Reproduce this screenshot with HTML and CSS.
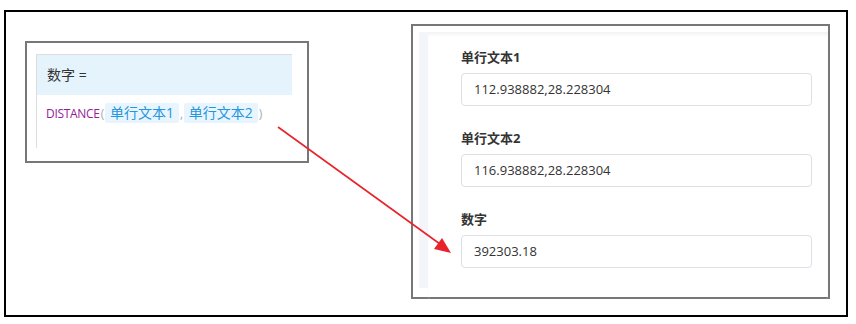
FILE: index.html
```html
<!DOCTYPE html>
<html lang="zh-CN">
<head>
    <meta charset="UTF-8">
    <title>DISTANCE 公式</title>
    <link rel="stylesheet" href="styles.css">
</head>
<body>
    <div class="frame">
        <div class="formula-box">
            <div class="formula">
                <div class="formula-head">数字 =</div>
                <div class="formula-body">
                    <span class="fn">DISTANCE</span><span class="paren">(</span><span class="chip">单行文本1</span><span class="paren">,</span><span class="chip">单行文本2</span><span class="paren">)</span>
                </div>
            </div>
        </div>

        <div class="form-box">
            <div class="strip"></div>
            <div class="form">
                <div class="field">
                    <label>单行文本1</label>
                    <div class="input">112.938882,28.228304</div>
                </div>
                <div class="field">
                    <label>单行文本2</label>
                    <div class="input">116.938882,28.228304</div>
                </div>
                <div class="field">
                    <label>数字</label>
                    <div class="input">392303.18</div>
                </div>
            </div>
        </div>

        <svg class="arrow" width="856" height="324" viewBox="0 0 856 324">
            <line x1="278" y1="127" x2="440" y2="244" stroke="#e8232b" stroke-width="1.6"/>
            <polygon points="451,253 434,249 442,238" fill="#e8232b"/>
        </svg>
    </div>
</body>
</html>
```

FILE: styles.css
```css
body {
    margin: 0;
    padding: 10px 0 0 4px;
    font-family: "Open Sans", "Noto Sans CJK SC", sans-serif;
    color: #333;
    background: #fff;
}
.frame {
    width: 840px;
    height: 303px;
    border: 2px solid #000;
    display: flex;
    align-items: flex-start;
}
.formula-box {
    width: 284px;
    height: 122px;
    margin: 29px 0 0 19px;
    border: 2px solid #777;
    padding: 11px 0 0 9px;
    box-sizing: border-box;
}
.formula {
    width: 256px;
    height: 94px;
    border-left: 1px solid #ddd;
    border-top: 1px solid #ddd;
    box-sizing: border-box;
}
.formula-head {
    height: 40px;
    line-height: 40px;
    padding-left: 10px;
    background-color: #e5f3fd;
    font-size: 14px;
}
.formula-body {
    padding: 8px 0 0 9px;
    font-size: 12px;
    line-height: 20px;
    letter-spacing: -0.3px;
}
.fn {
    color: #951b9b;
}
.paren {
    color: #aaa;
    padding: 0 1px;
}
.chip {
    display: inline-block;
    padding: 0 5px;
    background-color: #e9f5fe;
    color: #2396dc;
    border-radius: 2px;
    font-size: 14px;
    letter-spacing: 0;
}
.form-box {
    width: 419px;
    height: 275px;
    margin: 12px 0 0 102px;
    border: 2px solid #777;
    box-sizing: border-box;
    padding: 6px 0 0 6px;
    display: flex;
}
.strip {
    width: 9px;
    height: 256px;
    background-color: #f4f5fa;
}
.form {
    flex: 1;
    height: 256px;
    padding: 15px 16px 0 33px;
    box-shadow: inset 0 4px 4px -2px #f0f0f0;
}
.field {
    margin-bottom: 22px;
}
label {
    display: block;
    font-size: 13px;
    font-weight: bold;
    line-height: 20px;
    margin-bottom: 6px;
}
.input {
    height: 33px;
    line-height: 31px;
    padding: 0 12px;
    border: 1px solid #dcdfe6;
    border-radius: 4px;
    box-sizing: border-box;
    font-size: 13px;
}
.arrow {
    position: absolute;
    left: 0;
    top: 0;
    pointer-events: none;
}
```
